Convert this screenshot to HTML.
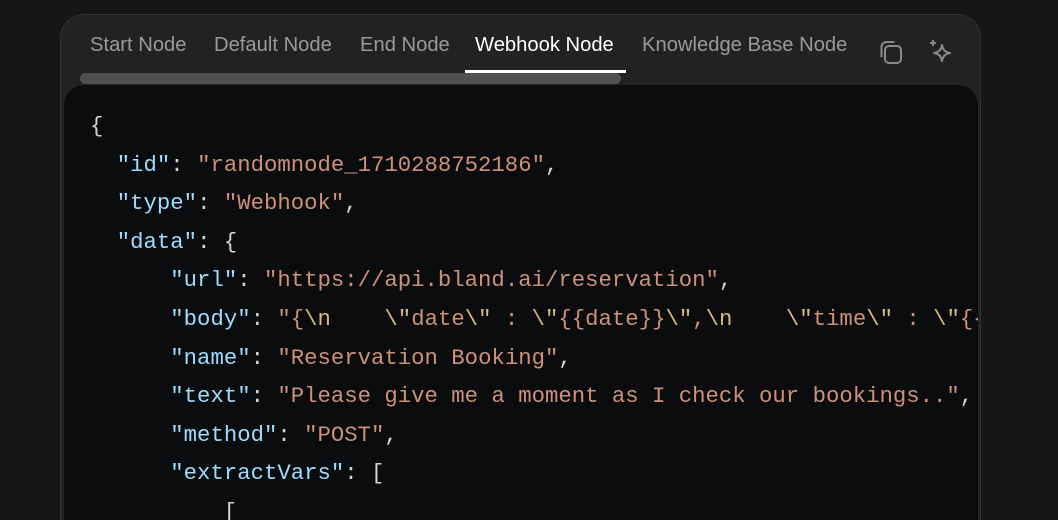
<!DOCTYPE html>
<html><head><style>
html,body{margin:0;padding:0;background:#161616;width:1058px;height:520px;overflow:hidden}
.card{position:absolute;left:60px;top:14px;width:921px;height:506px;background:#222222;border:1px solid #333;border-bottom:none;border-radius:24px 24px 0 0;box-sizing:border-box}
.tab{position:absolute;top:34px;font-family:"Liberation Sans",sans-serif;font-size:20.2px;line-height:22px;color:#9a9a9a;white-space:nowrap}
.tab.act{color:#fff}
.ul{position:absolute;left:465px;top:70px;width:161px;height:3px;background:#fff}
.sb{position:absolute;left:80px;top:73px;width:541px;height:11px;background:#505050;border-radius:6px}
.code{position:absolute;left:64px;top:85px;width:914px;height:435px;background:#0b0c0e;border-radius:20px 20px 0 0;overflow:hidden}
pre{margin:0;position:absolute;left:26px;top:22px;font-family:"Liberation Mono",monospace;font-size:22.3px;line-height:38.6px;color:#d4d4d4;white-space:pre}
.k{color:#9cdcfe}.s{color:#ce9178}.e{color:#d7ba7d}
</style></head><body>
<div class="card"></div>
<div class="tab" style="left:90px">Start Node</div>
<div class="tab" style="left:214px">Default Node</div>
<div class="tab" style="left:360px">End Node</div>
<div class="tab act" style="left:475px">Webhook Node</div>
<div class="tab" style="left:642px">Knowledge Base Node</div>
<svg style="position:absolute;left:877px;top:39px" width="28" height="26" viewBox="0 0 28 26" fill="none" stroke="#8a8a8a" stroke-width="2"><rect x="8" y="7" width="16" height="17" rx="4"/><path d="M4.5 18V8a5 5 0 0 1 5-5h8"/></svg>
<svg style="position:absolute;left:927px;top:38px" width="30" height="28" viewBox="0 0 30 28" fill="none" stroke="#8a8a8a" stroke-width="2" stroke-linejoin="round"><path d="M15 7c1 5 3 7 8 8-5 1-7 3-8 8-1-5-3-7-8-8 5-1 7-3 8-8z"/><path d="M6 2v6M3 5h6"/></svg>
<div class="ul"></div>
<div class="sb"></div>
<div class="code"><pre>{
  <span class="k">"id"</span>: <span class="s">"randomnode_1710288752186"</span>,
  <span class="k">"type"</span>: <span class="s">"Webhook"</span>,
  <span class="k">"data"</span>: {
      <span class="k">"url"</span>: <span class="s">"https://api.bland.ai/reservation"</span>,
      <span class="k">"body"</span>: <span class="s">"{</span><span class="e">\n</span><span class="s">    </span><span class="e">\"</span><span class="s">date</span><span class="e">\"</span><span class="s"> : </span><span class="e">\"</span><span class="s">{{date}}</span><span class="e">\"</span><span class="s">,</span><span class="e">\n</span><span class="s">    </span><span class="e">\"</span><span class="s">time</span><span class="e">\"</span><span class="s"> : </span><span class="e">\"</span><span class="s">{{time}}</span>
      <span class="k">"name"</span>: <span class="s">"Reservation Booking"</span>,
      <span class="k">"text"</span>: <span class="s">"Please give me a moment as I check our bookings.."</span>,
      <span class="k">"method"</span>: <span class="s">"POST"</span>,
      <span class="k">"extractVars"</span>: [
          [
</pre></div>
</body></html>
